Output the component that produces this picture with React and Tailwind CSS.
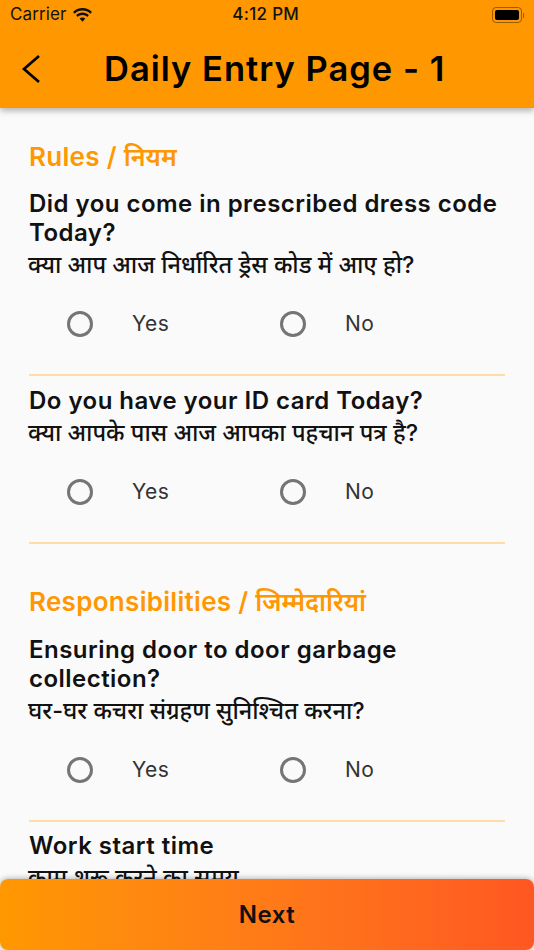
import React from "react";

const Radio = ({ label }) => (
  <div className="flex items-center w-[213px]">
    <span className="w-[26px] h-[26px] rounded-full border-[3px] border-[#757575] shrink-0" />
    <span className="ml-[39px] text-[21px] leading-[26px] text-[#333] tracking-[0.4px]">{label}</span>
  </div>
);

const Question = ({ en, hi, last }) => (
  <div>
    <p className="text-[24px] leading-[29px] font-semibold text-[#111] tracking-[0.47px]">{en}</p>
    <p className="mt-[1px] text-[23.5px] leading-[33px] font-medium text-[#111] -ml-px">{hi}</p>
    {!last && (
      <>
        <div className="flex pl-[38px] mt-[30px]">
          <Radio label="Yes" />
          <Radio label="No" />
        </div>
        <div className="h-[2px] bg-[#ffdca8] mt-[37px]" />
      </>
    )}
  </div>
);

const SectionTitle = ({ en, hi, className }) => (
  <h2 className={`text-[26px] leading-[32px] font-semibold text-[#ff9800] tracking-[0.3px] ${className}`}>
    {en} / <span className="text-[25px] tracking-normal">{hi}</span>
  </h2>
);

export default function App() {
  return (
    <div className="flex flex-col h-[950px] w-[534px] overflow-hidden bg-[#fafafa] font-['Inter','Noto_Sans','Noto_Sans_Devanagari',sans-serif]">
      {/* Header */}
      <div className="relative z-10 h-[108px] shrink-0 bg-[#ff9800] shadow-[0_3px_6px_rgba(0,0,0,0.28)]">
        <div className="flex items-center justify-between h-[30px] pl-[10px] pr-[10px] text-[#111]">
          <div className="flex items-center gap-[6px]">
            <span className="text-[17px] tracking-[0.1px]">Carrier</span>
            <svg width="21" height="15" viewBox="0 0 21 15" fill="#111">
              <path d="M10.5 2.6c3 0 5.7 1.2 7.8 3.1l1.7-1.8C17.5 1.5 14.2 0 10.5 0S3.500 1.500 1 3.900l1.700 1.800c2.100-1.900 4.800-3.100 7.800-3.100z" />
              <path d="M10.500 7c1.800 0 3.500.7 4.700 1.900l1.700-1.800c-1.700-1.600-3.900-2.600-6.400-2.600s-4.700 1-6.400 2.600l1.700 1.800C7 7.700 8.700 7 10.500 7z" />
              <path d="M10.500 9.500c-1.100 0-2.100.4-2.900 1.100l2.900 3.200 2.900-3.200c-.8-.7-1.800-1.100-2.900-1.100z" />
            </svg>
          </div>
          <span className="text-[17px] font-medium -ml-[54px] tracking-[0.3px]">4:12 PM</span>
          <div className="flex items-center">
            <div className="w-[30px] h-[16px] rounded-[4px] border border-[#9a5c00] p-[2px]">
              <div className="w-full h-full rounded-[2px] bg-black" />
            </div>
            <div className="w-[1px] h-[5px] ml-px bg-[#9a5c00]" />
          </div>
        </div>
        <div className="flex items-center h-[78px]">
          <svg className="ml-[20px] shrink-0" width="22" height="30" viewBox="0 0 22 30" fill="none" stroke="#000" strokeWidth="2.7">
            <path d="M19 2 L4 15 L19 28" />
          </svg>
          <h1 className="ml-[62px] text-[34.5px] leading-[40px] font-semibold text-black tracking-[1px]">Daily Entry Page - 1</h1>
        </div>
      </div>

      {/* Scrolling form */}
      <div className="flex-1 min-h-0 overflow-hidden px-[29px] pt-[33px]">
        <SectionTitle en="Rules" hi="नियम" />
        <div className="flex flex-col gap-[10px] mt-[16px]">
          <Question en="Did you come in prescribed dress code Today?" hi="क्या आप आज निर्धारित ड्रेस कोड में आए हो?" />
          <Question en="Do you have your ID card Today?" hi="क्या आपके पास आज आपका पहचान पत्र है?" />
        </div>
        <SectionTitle en="Responsibilities" hi="जिम्मेदारियां" className="mt-[42px]" />
        <div className="flex flex-col gap-[9px] mt-[17px]">
          <Question en="Ensuring door to door garbage collection?" hi="घर-घर कचरा संग्रहण सुनिश्चित करना?" />
          <Question en="Work start time" hi="काम शुरू करने का समय" last />
        </div>
      </div>

      {/* Footer button */}
      <button className="relative z-10 h-[71px] shrink-0 rounded-[8px] bg-gradient-to-r from-[#ff9800] to-[#ff5722] text-[24px] font-semibold text-[#111] tracking-[0.5px] shadow-[0_0_6px_rgba(0,0,0,0.35)]">
        Next
      </button>
    </div>
  );
}
